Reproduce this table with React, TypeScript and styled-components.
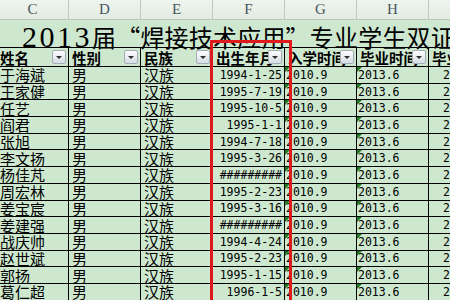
import React from "react";
import styled, { createGlobalStyle, css } from "styled-components";

type Student = {
  name: string;
  gender: string;
  nation: string;
  birth: string;
};

const students: Student[] = [
  { name: "于海斌", gender: "男", nation: "汉族", birth: "1994-1-25" },
  { name: "王家健", gender: "男", nation: "汉族", birth: "1995-7-19" },
  { name: "任艺", gender: "男", nation: "汉族", birth: "1995-10-5" },
  { name: "阎君", gender: "男", nation: "汉族", birth: "1995-1-1" },
  { name: "张旭", gender: "男", nation: "汉族", birth: "1994-7-18" },
  { name: "李文扬", gender: "男", nation: "汉族", birth: "1995-3-26" },
  { name: "杨佳芃", gender: "男", nation: "汉族", birth: "#########" },
  { name: "周宏林", gender: "男", nation: "汉族", birth: "1995-2-23" },
  { name: "姜宝宸", gender: "男", nation: "汉族", birth: "1995-3-16" },
  { name: "姜建强", gender: "男", nation: "汉族", birth: "#########" },
  { name: "战庆帅", gender: "男", nation: "汉族", birth: "1994-4-24" },
  { name: "赵世斌", gender: "男", nation: "汉族", birth: "1995-2-23" },
  { name: "郭扬", gender: "男", nation: "汉族", birth: "1995-1-15" },
  { name: "葛仁超", gender: "男", nation: "汉族", birth: "1996-1-5" },
];

const letters = ["C", "D", "E", "F", "G", "H", "I"];
const headers = ["姓名", "性别", "民族", "出生年月", "入学时间", "毕业时间", "毕业证书"];

const GlobalStyle = createGlobalStyle`
  body {
    margin: 0;
    background: #ffffff;
    font-family: "Noto Sans CJK SC", "Liberation Sans", sans-serif;
  }
`;

function App() {
  return (
    <>
      <GlobalStyle />
      <Sheet>
        <ColumnBar>
          {letters.map((l) => (
            <ColLetter key={l}>{l}</ColLetter>
          ))}
        </ColumnBar>
        <Title>
          <Digits>2013</Digits>届“焊接技术应用”专业学生双证书获取情况统计表
        </Title>
        <HeaderRow>
          {headers.map((h) => (
            <HeadCell key={h}>
              {h}
              <FilterButton />
            </HeadCell>
          ))}
        </HeaderRow>
        {students.map((s) => (
          <Row key={s.name}>
            <Cell>{s.name}</Cell>
            <Cell>{s.gender}</Cell>
            <Cell>{s.nation}</Cell>
            <Cell $num $right>
              {s.birth}
            </Cell>
            <Cell $num $flag $pad={1}>
              2010.9
            </Cell>
            <Cell $num $flag $pad={1}>
              2013.6
            </Cell>
            <Cell $num $pad={14}>
              2013.7
            </Cell>
          </Row>
        ))}
        <Highlight />
      </Sheet>
    </>
  );
}

export default App;

const cols = css`
  display: grid;
  grid-template-columns: repeat(7, 72px);
  margin-left: -3px;
`;

const Sheet = styled.div`
  position: relative;
  width: 450px;
  height: 300px;
  overflow: hidden;
  background: #cde8cf;
`;

const ColumnBar = styled.div`
  ${cols};
  height: 20px;
  box-sizing: border-box;
  background: linear-gradient(#eef4ee, #e2ece2);
  border-bottom: 1px solid #b9c7ba;
`;

const ColLetter = styled.div`
  display: flex;
  align-items: center;
  justify-content: center;
  border-right: 1px solid #bccabd;
  font-family: "Liberation Serif", serif;
  font-size: 15px;
  color: #4a5561;
`;

const Title = styled.div`
  height: 27px;
  padding-left: 22px;
  white-space: nowrap;
  font-size: 24px;
  line-height: 33px;
  letter-spacing: 0.2px;
  color: #000;
`;

const Digits = styled.span`
  font-family: "Liberation Serif", serif;
  font-size: 30px;
  letter-spacing: 2.5px;
`;

const HeaderRow = styled.div`
  ${cols};
  height: 20px;
  box-sizing: border-box;
  border-top: 1px solid #000;
  border-bottom: 1px solid #000;
`;

const HeadCell = styled.div`
  position: relative;
  display: flex;
  align-items: center;
  padding-left: 3px;
  overflow: hidden;
  white-space: nowrap;
  border-right: 1px solid #000;
  font-size: 14.5px;
  font-weight: 700;
  color: #000;
`;

const FilterButton = styled.span`
  position: absolute;
  right: 2px;
  top: 2px;
  width: 14px;
  height: 14px;
  box-sizing: border-box;
  border: 1px solid #a3adb8;
  border-radius: 2px;
  background: linear-gradient(#fbfcfd, #d7dde4);
  &::after {
    content: "";
    position: absolute;
    left: 3px;
    top: 5px;
    border-left: 3.5px solid transparent;
    border-right: 3.5px solid transparent;
    border-top: 3px solid #2d2d2d;
  }
`;

const Row = styled.div`
  ${cols};
  height: 16.7px;
  box-sizing: border-box;
  border-bottom: 1px solid #000;
`;

const Cell = styled.div<{ $num?: boolean; $right?: boolean; $flag?: boolean; $pad?: number }>`
  position: relative;
  display: flex;
  align-items: center;
  justify-content: ${({ $right }) => ($right ? "flex-end" : "flex-start")};
  padding: 0 2px 0 ${({ $pad }) => $pad ?? 3}px;
  overflow: hidden;
  white-space: nowrap;
  border-right: 1px solid #000;
  color: #000;
  font-size: ${({ $num }) => ($num ? "11.5px" : "15px")};
  font-family: ${({ $num }) =>
    $num ? `"DejaVu Sans Mono", monospace` : `"Noto Sans CJK SC", sans-serif`};
  ${({ $flag }) =>
    $flag &&
    css`
      &::before {
        content: "";
        position: absolute;
        left: 0;
        top: 0;
        border-top: 5px solid #1d7a22;
        border-right: 5px solid transparent;
      }
    `}
`;

const Highlight = styled.div`
  position: absolute;
  left: 210px;
  top: 40px;
  width: 82px;
  height: 300px;
  box-sizing: border-box;
  border: 3px solid #e01a1c;
`;
